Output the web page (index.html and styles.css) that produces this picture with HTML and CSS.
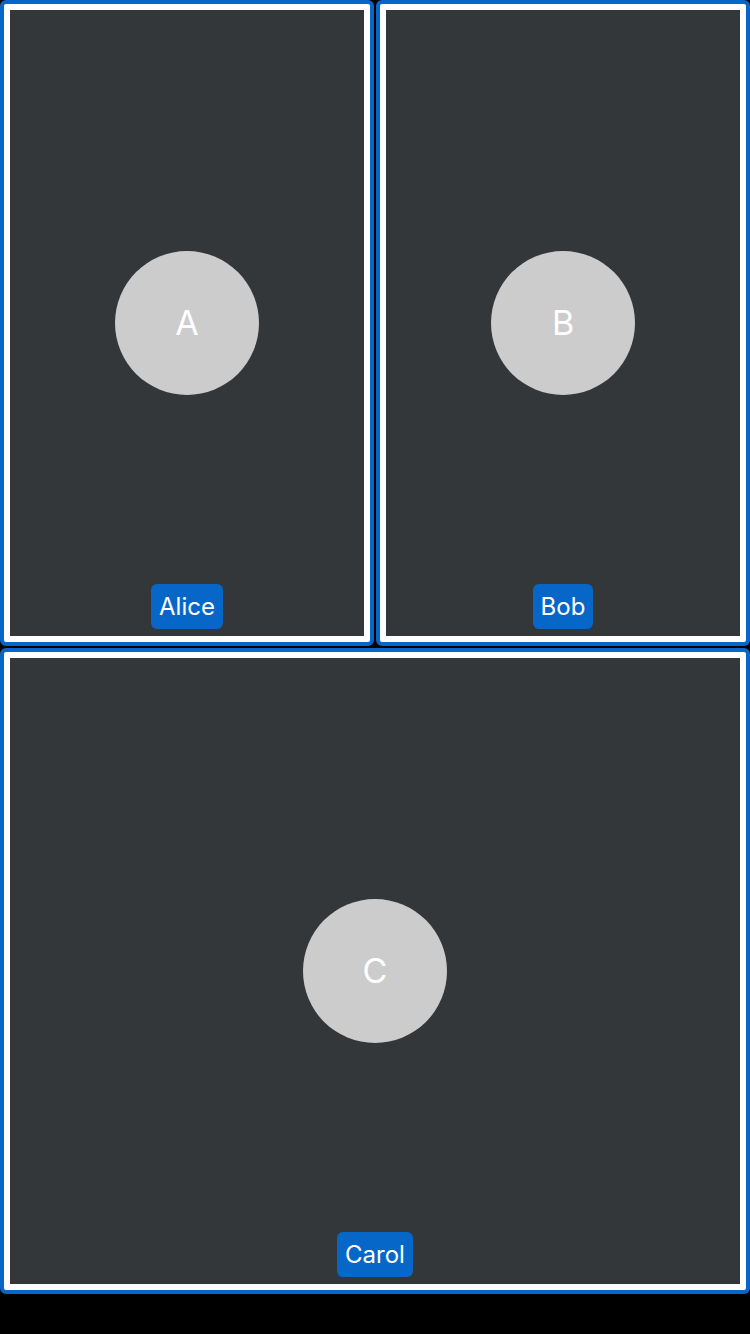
FILE: index.html
```html
<!DOCTYPE html>
<html lang="en">
<head>
<meta charset="utf-8">
<meta name="viewport" content="width=device-width, initial-scale=1">
<title>Call</title>
<link rel="stylesheet" href="styles.css">
</head>
<body>
<main class="grid">
  <section class="tile">
    <div class="video"><div class="avatar">A</div><div class="name">Alice</div></div>
  </section>
  <section class="tile">
    <div class="video"><div class="avatar">B</div><div class="name">Bob</div></div>
  </section>
  <section class="tile wide">
    <div class="video"><div class="avatar">C</div><div class="name">Carol</div></div>
  </section>
</main>
</body>
</html>
```
FILE: styles.css
```css
* {
  box-sizing: border-box;
}

body {
  margin: 0;
  background: #000;
  color: #fff;
  font-family: Inter, "Liberation Sans", sans-serif;
}

.grid {
  display: grid;
  grid-template-columns: 1fr 1fr;
  grid-template-rows: 1fr 1fr;
  gap: 2px;
  height: 100vh;
  padding-bottom: 40px;
}

.tile {
  display: grid;
  padding: 6px;
  border: 4px solid #0667c9;
  border-radius: 6px;
  background: #fff;
}

.wide {
  grid-column: 1 / -1;
}

.video {
  display: grid;
  grid-template: 1fr / 1fr;
  justify-items: center;
  background: #34373a;
}

.avatar,
.name {
  grid-area: 1 / 1;
}

.avatar {
  display: grid;
  place-items: center;
  align-self: center;
  width: 144px;
  height: 144px;
  border-radius: 50%;
  background: #ccc;
  font-size: 34px;
  line-height: 42px;
}

.name {
  align-self: end;
  margin-bottom: 7px;
  padding: 8px;
  border-radius: 6px;
  background: #0667c9;
  font-size: 24px;
  line-height: 29px;
}
```
